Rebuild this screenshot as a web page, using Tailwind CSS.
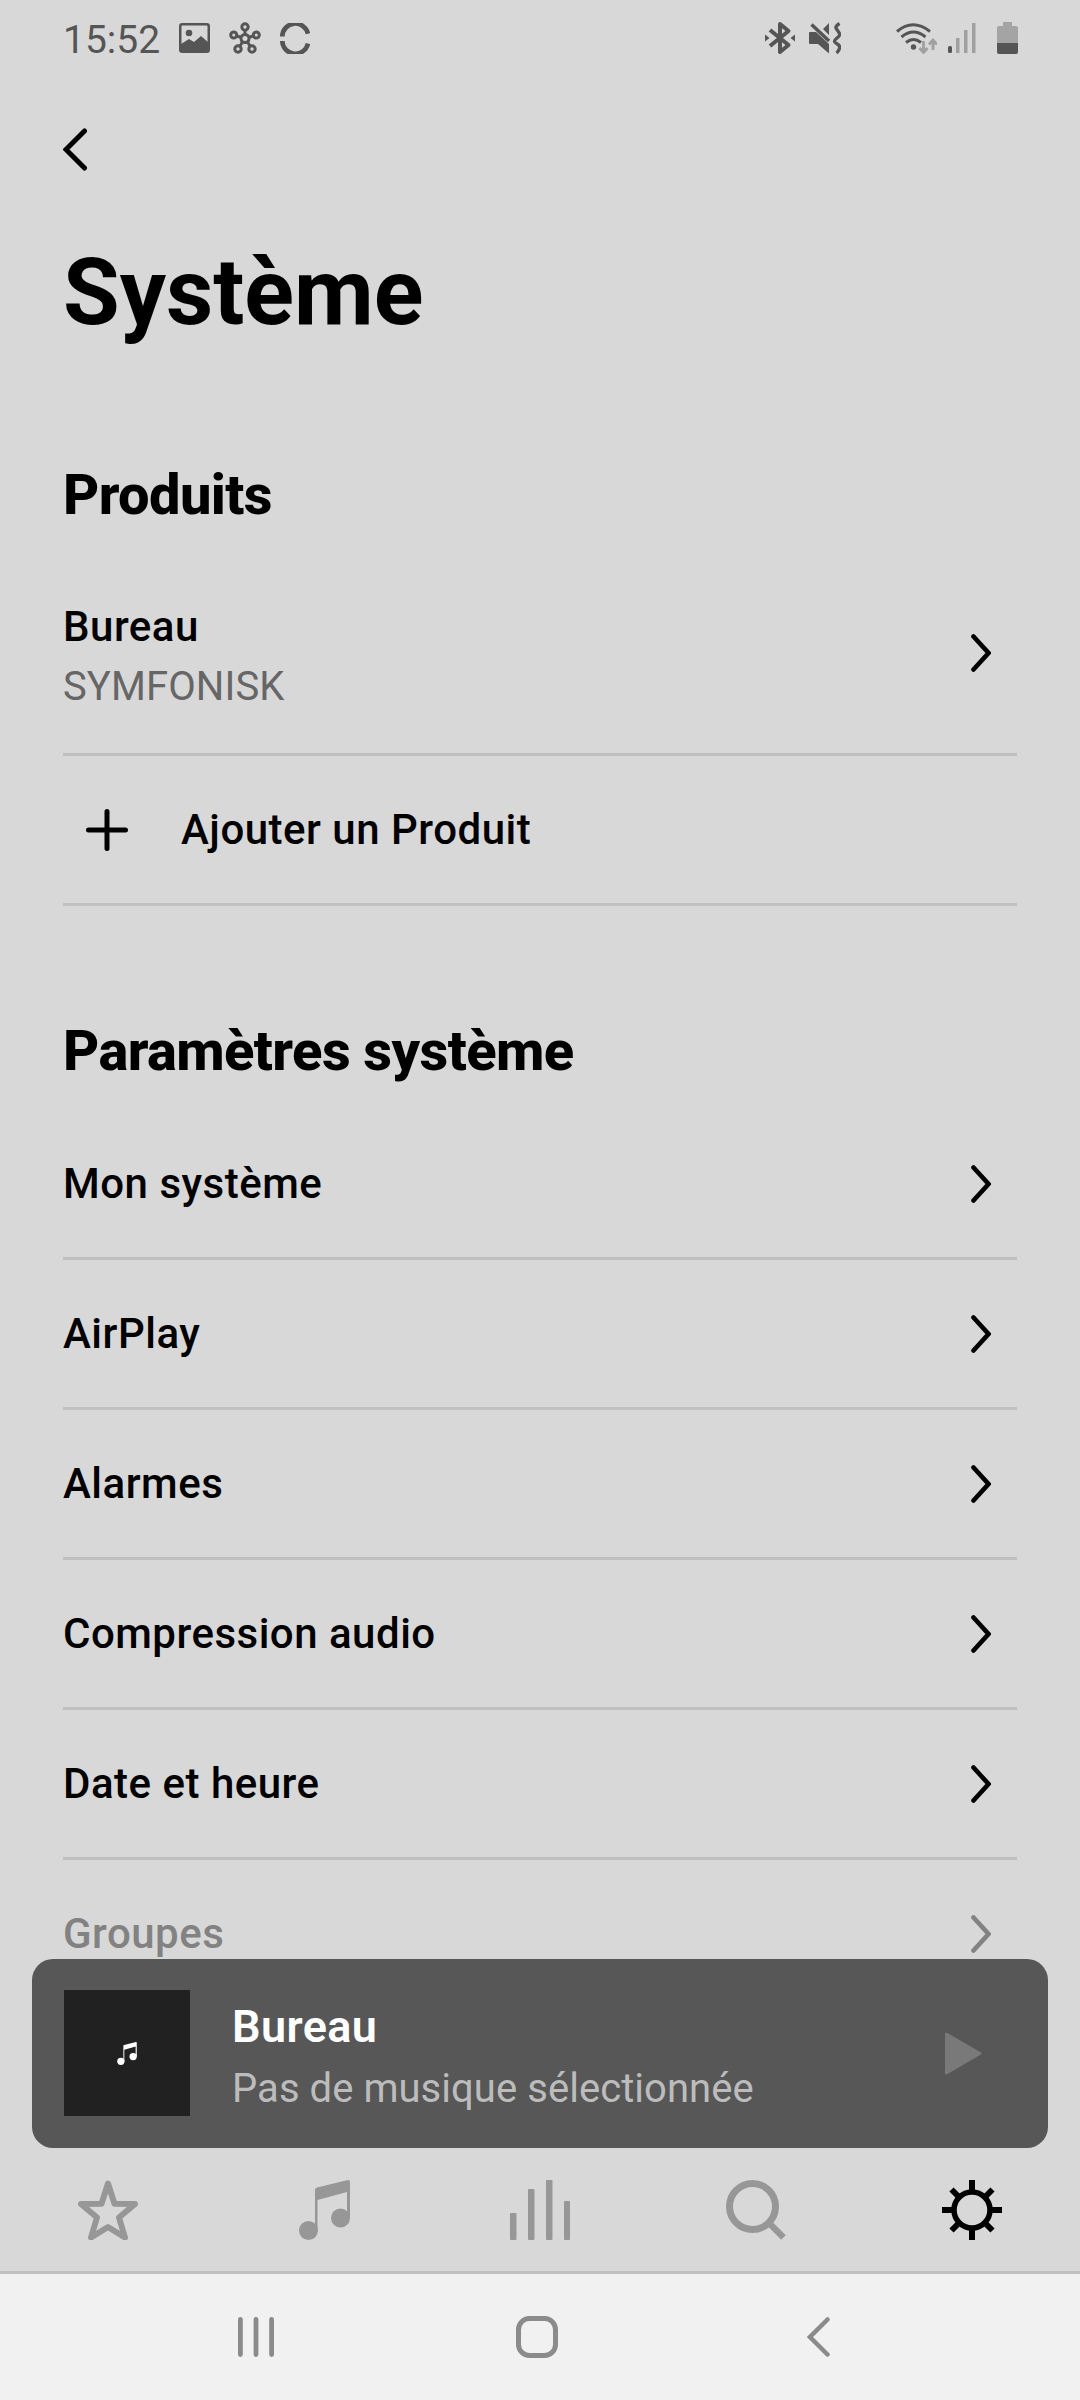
<!DOCTYPE html>
<html lang="fr">

<head>
  <meta charset="UTF-8" />
  <meta name="viewport" content="width=device-width, initial-scale=1.0" />
  <title>Système</title>
  <script src="https://cdn.jsdelivr.net/npm/@tailwindcss/browser@4"></script>
</head>

<body class="bg-[#d8d8d8] text-black font-['Roboto',sans-serif]">
  <div class="w-[1080px] h-[2400px] flex flex-col overflow-hidden">

    <!-- Status bar -->
    <header class="h-20 shrink-0 flex items-center justify-between text-[#555]">
      <div class="flex items-center pl-[63px]">
        <span class="text-[39px] leading-none w-[116px] pt-[1px]">15:52</span>
        <svg class="w-[31px] h-[30px] -mt-[4px]" viewBox="0 0 31 30">
          <rect x="1.25" y="1.25" width="28.5" height="27.5" rx="2" fill="none" stroke="currentColor" stroke-width="2.5" />
          <circle cx="10" cy="10" r="3.3" fill="currentColor" />
          <path d="M2 21 10 16l5 3 7-6 8 7v9H2z" fill="currentColor" />
        </svg>
        <svg class="w-8 h-8 ml-[19px] -mt-[4px]" viewBox="0 0 32 32" fill="none" stroke="currentColor" stroke-width="3">
          <circle cx="16" cy="16.5" r="4" />
          <circle cx="16" cy="5" r="3.2" />
          <circle cx="4.7" cy="13" r="3" />
          <circle cx="27.3" cy="13" r="3" />
          <circle cx="9" cy="27" r="3.2" />
          <circle cx="23" cy="27" r="3.2" />
          <path d="M16 8.500v4M7.700 14l4.300 1.300M24.300 14 20 15.300M11 24l2.600-4.300M21 24l-2.600-4.300" />
        </svg>
        <svg class="w-[30px] h-[31px] ml-[19px] -mt-[4px]" viewBox="0 0 30 31" fill="none" stroke="currentColor" stroke-width="4.600">
          <path d="M2.300 13.500A13 13 0 0 1 28 10.800M2.300 18A13 13 0 0 0 28 20.500" />
        </svg>
      </div>

      <div class="flex items-center pr-[62px] -mt-[5px]">
        <svg class="w-[30px] h-[34px]" viewBox="0 0 30 34">
          <path d="M5 9 23.500 24 15 31V3l8.500 7L5 25" fill="none" stroke="currentColor" stroke-width="4" stroke-linejoin="round" />
          <path d="M0 13.500 4.500 17 0 20.500zM30 13.500 25.500 17l4.500 3.500z" fill="currentColor" />
        </svg>
        <svg class="w-8 h-[34px] ml-[14px]" viewBox="0 0 32 34">
          <path d="M1 11h6l13 12v9.500L9 23H1q-1 0-1-1V12q0-1 1-1zM20 2v12l-6-6z" fill="currentColor" />
          <path d="M2.500 3.500 20 20" stroke="currentColor" stroke-width="3.500" />
          <path d="M30.500 2.500q-5 3-3 5.500t3 4.500-3 5 0 5 3 5-3 4.500" fill="none" stroke="currentColor" stroke-width="3.400" />
        </svg>
        <svg class="w-[42px] h-8 ml-[54px]" viewBox="0 0 42 32">
          <path d="M2 9.500q16-13.500 33 0M6.500 15q12-10 24 0M11 20.500q7.500-6 15 0" fill="none" stroke="currentColor" stroke-width="3" />
          <circle cx="18.500" cy="25" r="2.700" fill="currentColor" />
          <path d="M28.500 19v11M24.500 26l4 4.500 4-4.500M38 28V18M34 22.500l4-4.500 4 4.500" fill="none" stroke="#a0a0a0" stroke-width="2.800" />
        </svg>
        <svg class="w-7 h-[31px] ml-[11px]" viewBox="0 0 28 31">
          <rect x="0" y="24" width="4" height="7" rx="1.500" fill="currentColor" />
          <path d="M8 16h3.500v15H8zM16 8h3.500v23H16zM24 1h3.500v30H24z" fill="#a0a0a0" />
        </svg>
        <svg class="w-[21px] h-8 ml-[21px]" viewBox="0 0 21 32">
          <path d="M6 0h9v4h4q2 0 2 2v15H0V6q0-2 2-2h4z" fill="#a4a4a4" />
          <path d="M0 21h21v9q0 2-2 2H2q-2 0-2-2z" fill="currentColor" />
        </svg>
      </div>
    </header>

    <main class="h-[1879px] shrink-0 px-[63px] overflow-hidden">
      <button class="block mt-[48px]">
        <svg class="w-6 h-[43px]" viewBox="0 0 24 43" fill="none" stroke="currentColor" stroke-width="5" stroke-linecap="round">
          <path d="M21.500 3 3 21.500l18.500 18.500" />
        </svg>
      </button>

      <h1 class="mt-[68px] text-[92px] leading-[108px] font-bold">Système</h1>

      <h2 class="mt-[115px] text-[56px] leading-[66px] tracking-[-0.6px] font-extrabold">Produits</h2>
      <ul class="mt-[25px] text-[42px] leading-[50px] tracking-[0.5px] font-medium">
        <li class="h-[203px] flex items-center justify-between border-b-3 border-[#c0c0c0] pr-[26px]">
          <div class="pt-2">
            <p>Bureau</p>
            <p class="mt-[10px] text-[40px] tracking-[0.1px] font-normal text-[#666]">SYMFONISK</p>
          </div>
          <svg class="w-5 h-[38px]" viewBox="0 0 20 38" fill="none" stroke="currentColor" stroke-width="4.600" stroke-linecap="round">
            <path d="m2.500 2.500 15 16.500-15 16.500" />
          </svg>
        </li>
        <li class="h-[150px] flex items-center border-b-3 border-[#c0c0c0] pl-[23px]">
          <svg class="w-[42px] h-[42px]" viewBox="0 0 42 42" stroke="currentColor" stroke-width="5" stroke-linecap="round">
            <path d="M21 2.500v37M2.500 21h37" />
          </svg>
          <span class="ml-[53px]">Ajouter un Produit</span>
        </li>
      </ul>

      <h2 class="mt-[112px] text-[56px] leading-[66px] tracking-[-0.6px] font-extrabold">Paramètres système</h2>
      <ul class="mt-[26px] text-[42px] leading-[50px] tracking-[0.5px] font-medium">
        <li class="h-[150px] flex items-center justify-between border-b-3 border-[#c0c0c0] pr-[26px]">
          Mon système
          <svg class="w-5 h-[38px]" viewBox="0 0 20 38" fill="none" stroke="currentColor" stroke-width="4.600" stroke-linecap="round">
            <path d="m2.500 2.500 15 16.500-15 16.500" />
          </svg>
        </li>
        <li class="h-[150px] flex items-center justify-between border-b-3 border-[#c0c0c0] pr-[26px]">
          AirPlay
          <svg class="w-5 h-[38px]" viewBox="0 0 20 38" fill="none" stroke="currentColor" stroke-width="4.600" stroke-linecap="round">
            <path d="m2.500 2.500 15 16.500-15 16.500" />
          </svg>
        </li>
        <li class="h-[150px] flex items-center justify-between border-b-3 border-[#c0c0c0] pr-[26px]">
          Alarmes
          <svg class="w-5 h-[38px]" viewBox="0 0 20 38" fill="none" stroke="currentColor" stroke-width="4.600" stroke-linecap="round">
            <path d="m2.500 2.500 15 16.500-15 16.500" />
          </svg>
        </li>
        <li class="h-[150px] flex items-center justify-between border-b-3 border-[#c0c0c0] pr-[26px]">
          Compression audio
          <svg class="w-5 h-[38px]" viewBox="0 0 20 38" fill="none" stroke="currentColor" stroke-width="4.600" stroke-linecap="round">
            <path d="m2.500 2.500 15 16.500-15 16.500" />
          </svg>
        </li>
        <li class="h-[150px] flex items-center justify-between border-b-3 border-[#c0c0c0] pr-[26px]">
          Date et heure
          <svg class="w-5 h-[38px]" viewBox="0 0 20 38" fill="none" stroke="currentColor" stroke-width="4.600" stroke-linecap="round">
            <path d="m2.500 2.500 15 16.500-15 16.500" />
          </svg>
        </li>
        <li class="h-[147px] flex items-center justify-between pr-[26px] text-[#828282]">
          Groupes
          <svg class="w-5 h-[38px]" viewBox="0 0 20 38" fill="none" stroke="currentColor" stroke-width="4.600" stroke-linecap="round">
            <path d="m2.500 2.500 15 16.500-15 16.500" />
          </svg>
        </li>
      </ul>
    </main>

    <!-- Mini player -->
    <section class="h-[189px] shrink-0 mx-8 pl-8 pr-[66px] flex items-center rounded-[21px] bg-[#575757]">
      <div class="size-[126px] -mt-[1px] flex items-center justify-center bg-[#212121]">
        <svg class="w-5 h-[23px]" viewBox="0 0 51 60" fill="white">
          <path d="M16 10Q16 8 18 7.500L49 0Q51 0 51 2V38H48V12L18.500 20V51H16z" />
          <circle cx="9.500" cy="50.500" r="9.500" />
          <circle cx="41.500" cy="38" r="9.500" />
        </svg>
      </div>
      <div class="ml-[42px] pt-[7px] flex-1">
        <p class="text-[45px] leading-[54px] tracking-[0.4px] font-semibold text-white">Bureau</p>
        <p class="mt-[10px] text-[40px] leading-[50px] tracking-[0.05px] text-[#bcbcbc]">Pas de musique sélectionnée</p>
      </div>
      <svg class="w-[37px] h-[43px]" viewBox="0 0 37 43" fill="#797979">
        <path d="M0 2Q0-.500 2.500 1L36 20.500q1.500 1 0 2L2.500 42Q0 43.500 0 41z" />
      </svg>
    </section>

    <!-- Tabs -->
    <nav class="h-[126px] shrink-0 grid grid-cols-5 items-center justify-items-center border-b-3 border-[#c0c0c0] pt-[1px] text-[#979797]">
      <svg class="size-[60px]" viewBox="0 0 60 60" fill="none" stroke="currentColor" stroke-width="6" stroke-linejoin="round">
        <path d="m30 3.500 6.500 20.300 20.500.2-16 13.500 6 20L30 47 13 57.500l6-20L3 24l20.500-.200z" />
      </svg>
      <svg class="w-[51px] h-[60px]" viewBox="0 0 51 60" fill="currentColor">
        <path d="M16 10Q16 8 18 7.500L49 0Q51 0 51 2V38H48V12L18.500 20V51H16z" />
        <circle cx="9.500" cy="50.500" r="9.500" />
        <circle cx="41.500" cy="38" r="9.500" />
      </svg>
      <svg class="size-[60px]" viewBox="0 0 60 60" fill="currentColor">
        <rect x="0" y="33" width="6.500" height="27" rx="1" />
        <rect x="18" y="9" width="6.500" height="51" rx="1" />
        <rect x="36" y="0" width="6.500" height="60" rx="1" />
        <rect x="54" y="21" width="6" height="39" rx="1" />
      </svg>
      <svg class="size-[60px]" viewBox="0 0 60 60" fill="none" stroke="currentColor">
        <circle cx="26.500" cy="26.500" r="23" stroke-width="7" />
        <path d="m42.500 42.500 15 15" stroke-width="6.500" />
      </svg>
      <svg class="size-[60px] text-black" viewBox="0 0 60 60" fill="none" stroke="currentColor" stroke-width="6">
        <circle cx="30" cy="30" r="18" stroke-width="5.500" />
        <path d="M30 0v11M30 49v11M0 30h11M49 30h11M9.500 9.500l8 8M42.500 42.500l8 8M50.500 9.500l-8 8M17.500 42.500l-8 8" />
      </svg>
    </nav>

    <!-- Android navigation -->
    <footer class="h-[126px] shrink-0 flex items-center justify-between pl-[238px] pr-[250px] bg-[#f1f1f1] text-[#8b8b8b]">
      <svg class="w-9 h-10" viewBox="0 0 36 40" stroke="currentColor" stroke-width="4.800" stroke-linecap="round">
        <path d="M2.400 2.500v35M18 2.500v35M33.600 2.500v35" />
      </svg>
      <svg class="size-[42px] mr-2" viewBox="0 0 42 42" fill="none" stroke="currentColor" stroke-width="5">
        <rect x="2.500" y="2.500" width="37" height="37" rx="11" />
      </svg>
      <svg class="w-[23px] h-10" viewBox="0 0 23 40" fill="none" stroke="currentColor" stroke-width="4.500" stroke-linecap="round">
        <path d="M20.500 2.500 3 20l17.500 17.500" />
      </svg>
    </footer>
  </div>
</body>

</html>
